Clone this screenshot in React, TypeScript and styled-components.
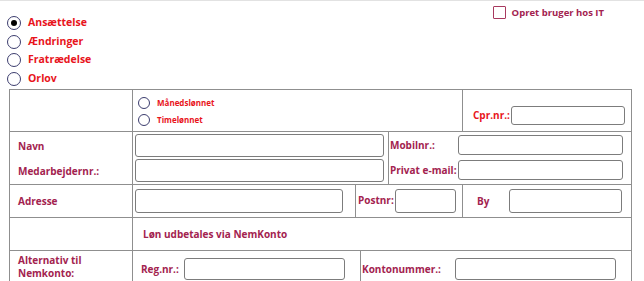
import React from "react";
import styled, { createGlobalStyle } from "styled-components";

const GlobalStyle = createGlobalStyle`
  html, body {
    margin: 0;
    padding: 0;
    background: #fff;
    font-family: "Open Sans", "Liberation Sans", sans-serif;
  }
  html {
    overflow-y: scroll;
  }
  body {
    border-top: 1px solid #e2e2e2;
  }
  ::-webkit-scrollbar {
    width: 11px;
  }
  ::-webkit-scrollbar-track {
    background: #f1f1f1;
  }
  ::-webkit-scrollbar-thumb {
    background: #c1c1c1;
  }
`;

const RED = "#e8141c";
const PLUM = "#a3234f";
const LINE = "#8f8f8f";

const Page = styled.div`
  padding: 0 0 0 7px;
  width: 623px;
  min-height: 1100px;
`;

const TopBar = styled.div`
  display: flex;
  justify-content: space-between;
  align-items: flex-start;
`;

const RadioList = styled.div`
  display: flex;
  flex-direction: column;
  gap: 3px;
  padding-top: 14px;
`;

const OptionLabel = styled.label<{ $small?: boolean }>`
  display: flex;
  align-items: center;
  gap: 7px;
  font-size: ${(p) => (p.$small ? "8px" : "10.5px")};
  font-weight: 700;
  color: ${RED};
  line-height: ${(p) => (p.$small ? "12px" : "15.7px")};
  cursor: pointer;
`;

const Radio = styled.input.attrs({ type: "radio" })<{ $size?: number }>`
  appearance: none;
  margin: 0;
  width: ${(p) => p.$size ?? 14}px;
  height: ${(p) => p.$size ?? 14}px;
  border: 1.2px solid #3c3d6e;
  border-radius: 50%;
  background: #fff;
  display: grid;
  place-items: center;
  flex: none;
  &:checked::after {
    content: "";
    width: 6px;
    height: 6px;
    border-radius: 50%;
    background: #000;
  }
`;

const CheckLabel = styled.label`
  display: flex;
  align-items: center;
  gap: 6px;
  margin: 5px 26px 0 0;
  font-size: 9.5px;
  font-weight: 700;
  color: ${PLUM};
`;

const Check = styled.input.attrs({ type: "checkbox" })`
  appearance: none;
  margin: 0;
  width: 13px;
  height: 13px;
  border: 1.2px solid #a8395f;
  border-radius: 1px;
  background: #fff;
`;

const Table = styled.div`
  margin: 2px 0 0 2px;
  width: 621px;
  border: 1.5px solid ${LINE};
  border-bottom: none;
`;

const Row = styled.div<{ $cols: string; $h: number }>`
  display: grid;
  grid-template-columns: ${(p) => p.$cols};
  min-height: ${(p) => p.$h}px;
  & + & {
    border-top: 1.5px solid ${LINE};
  }
`;

const Cell = styled.div<{ $align?: string; $pad?: string }>`
  display: flex;
  flex-direction: column;
  justify-content: ${(p) => p.$align ?? "center"};
  align-items: stretch;
  padding: ${(p) => p.$pad ?? "0 0 0 8px"};
  & + & {
    border-left: 1.5px solid ${LINE};
  }
`;

const InlineCell = styled(Cell)<{ $end?: boolean }>`
  flex-direction: row;
  justify-content: ${(p) => (p.$end ? "flex-end" : "flex-start")};
  align-items: ${(p) => (p.$end ? "flex-end" : "center")};
`;

const Label = styled.span<{ $red?: boolean; $w?: number; $wrap?: boolean }>`
  font-size: 10px;
  font-weight: 700;
  color: ${(p) => (p.$red ? RED : PLUM)};
  line-height: ${(p) => (p.$wrap ? "13px" : "12px")};
  white-space: ${(p) => (p.$wrap ? "normal" : "nowrap")};
  flex: none;
  width: ${(p) => (p.$w ? `${p.$w}px` : "auto")};
`;

const TopLabel = styled(Label)`
  align-self: flex-start;
  margin-top: 9px;
`;

const FieldLine = styled.div<{ $h: number }>`
  display: flex;
  align-items: center;
  height: ${(p) => p.$h}px;
`;

const Field = styled.input<{ $w: number; $h: number }>`
  box-sizing: border-box;
  width: ${(p) => p.$w}px;
  height: ${(p) => p.$h}px;
  border: 1px solid #7c7c7c;
  border-radius: 3px;
  background: #fff;
  margin: 0;
  padding: 0 4px;
  font: inherit;
  font-size: 10px;
  flex: none;
`;

const Stack = styled.div<{ $gap: number; $top?: number }>`
  display: flex;
  flex-direction: column;
  gap: ${(p) => p.$gap}px;
  padding-top: ${(p) => p.$top ?? 0}px;
`;

export default function App() {
  return (
    <>
      <GlobalStyle />
      <Page>
        <TopBar>
          <RadioList>
            <OptionLabel>
              <Radio name="type" defaultChecked />
              Ansættelse
            </OptionLabel>
            <OptionLabel>
              <Radio name="type" />
              Ændringer
            </OptionLabel>
            <OptionLabel>
              <Radio name="type" />
              Fratrædelse
            </OptionLabel>
            <OptionLabel>
              <Radio name="type" />
              Orlov
            </OptionLabel>
          </RadioList>
          <CheckLabel>
            <Check />
            Opret bruger hos IT
          </CheckLabel>
        </TopBar>

        <Table>
          <Row $cols="122px 330px 1fr" $h={41}>
            <Cell />
            <Cell $pad="0 0 0 5px">
              <Stack $gap={5} $top={3}>
                <OptionLabel $small>
                  <Radio name="pay" $size={12} />
                  Månedslønnet
                </OptionLabel>
                <OptionLabel $small>
                  <Radio name="pay" $size={12} />
                  Timelønnet
                </OptionLabel>
              </Stack>
            </Cell>
            <InlineCell $end $pad="0 6px 6px 8px">
              <FieldLine $h={19}>
                <Label $red $w={38}>Cpr.nr.:</Label>
              </FieldLine>
              <Field $w={114} $h={19} />
            </InlineCell>
          </Row>

          <Row $cols="122px 256px 1fr" $h={52}>
            <Cell>
              <Stack $gap={13} $top={2}>
                <FieldLine $h={12}>
                  <Label>Navn</Label>
                </FieldLine>
                <FieldLine $h={12}>
                  <Label>Medarbejdernr.:</Label>
                </FieldLine>
              </Stack>
            </Cell>
            <Cell $pad="0 0 0 2px">
              <Stack $gap={2}>
                <Field $w={249} $h={23} />
                <Field $w={249} $h={23} />
              </Stack>
            </Cell>
            <Cell $pad="0 0 0 1px">
              <Stack $gap={5}>
                <FieldLine $h={20}>
                  <Label $w={68}>Mobilnr.:</Label>
                  <Field $w={165} $h={20} />
                </FieldLine>
                <FieldLine $h={20}>
                  <Label $w={68}>Privat e-mail:</Label>
                  <Field $w={165} $h={20} />
                </FieldLine>
              </Stack>
            </Cell>
          </Row>

          <Row $cols="122px 223px 107px 1fr" $h={32}>
            <Cell>
              <Label>Adresse</Label>
            </Cell>
            <Cell $pad="0 0 0 2px">
              <Field $w={208} $h={24} />
            </Cell>
            <InlineCell $pad="0 0 0 2px">
              <TopLabel $w={37}>Postnr:</TopLabel>
              <Field $w={61} $h={24} />
            </InlineCell>
            <InlineCell $pad="0 0 0 14px">
              <Label $w={32}>By</Label>
              <Field $w={113} $h={24} />
            </InlineCell>
          </Row>

          <Row $cols="122px 1fr" $h={32}>
            <Cell />
            <Cell $pad="0 0 0 10px">
              <Label>Løn udbetales via NemKonto</Label>
            </Cell>
          </Row>

          <Row $cols="122px 228px 1fr" $h={36}>
            <Cell $align="flex-start" $pad="3px 0 0 8px">
              <Label $wrap>
                Alternativ til
                <br />
                Nemkonto:
              </Label>
            </Cell>
            <InlineCell $pad="0 0 0 8px">
              <Label $w={43}>Reg.nr.:</Label>
              <Field $w={161} $h={22} />
            </InlineCell>
            <InlineCell $pad="0 0 0 1px">
              <Label $w={93}>Kontonummer.:</Label>
              <Field $w={161} $h={22} />
            </InlineCell>
          </Row>

          <Row $cols="122px 1fr" $h={34}>
            <Cell>
              <Label>Stilling</Label>
            </Cell>
            <Cell $pad="0 0 0 2px">
              <Field $w={488} $h={22} />
            </Cell>
          </Row>
        </Table>
      </Page>
    </>
  );
}
